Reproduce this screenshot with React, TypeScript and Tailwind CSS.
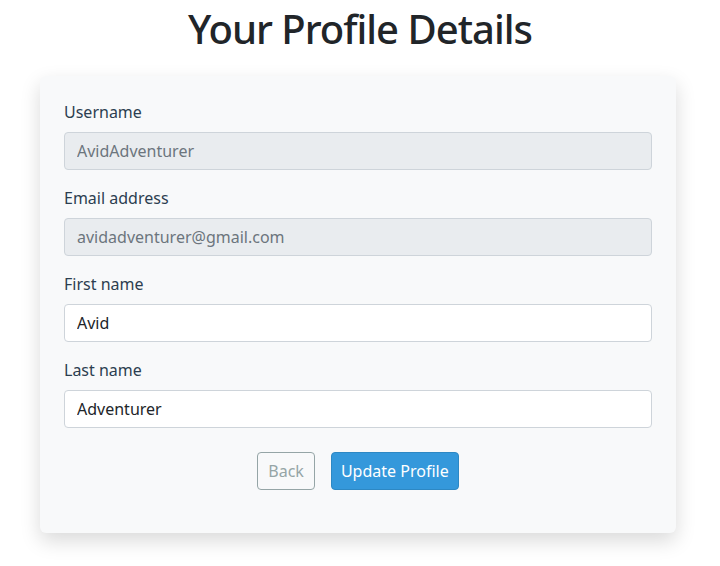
import React from "react";

const font = { fontFamily: '"Noto Sans", "Open Sans", sans-serif' };

function Field({ label, value, disabled }: { label: string; value: string; disabled?: boolean }) {
  return (
    <div className="mb-4">
      <label className="mb-2 block text-[16px] leading-6 text-[#2c3e50]">{label}</label>
      <input
        readOnly
        disabled={disabled}
        value={value}
        className={
          "block h-[38px] w-full rounded-[4px] border border-[#ced4da] px-3 text-[16px] outline-none " +
          (disabled ? "bg-[#e9ecef] text-[#6c757d]" : "bg-white text-[#212529]")
        }
      />
    </div>
  );
}

export default function App() {
  return (
    <div className="min-h-[566px] bg-white pt-[5px]" style={font}>
      <h1 className="mb-[23px] text-center text-[40px] font-medium leading-[48px] tracking-[-1px] text-[#212529]">
        Your Profile Details
      </h1>
      <div className="ml-10 w-[636px] rounded-md bg-[#f8f9fa] p-6 pb-[43px] shadow-[0_8px_20px_rgba(0,0,0,0.15)]">
        <form>
          <Field label="Username" value="AvidAdventurer" disabled />
          <Field label="Email address" value="avidadventurer@gmail.com" disabled />
          <Field label="First name" value="Avid" />
          <Field label="Last name" value="Adventurer" />
          <div className="mt-6 flex justify-center gap-4">
            <button
              type="button"
              className="h-[38px] rounded-[4px] border border-[#95a5a6] bg-transparent px-[10px] text-[16px] text-[#95a5a6]"
            >
              Back
            </button>
            <button
              type="button"
              className="h-[38px] rounded-[4px] border border-[#2d88c4] bg-[#3498db] px-[9px] text-[16px] text-white"
            >
              Update Profile
            </button>
          </div>
        </form>
      </div>
    </div>
  );
}
